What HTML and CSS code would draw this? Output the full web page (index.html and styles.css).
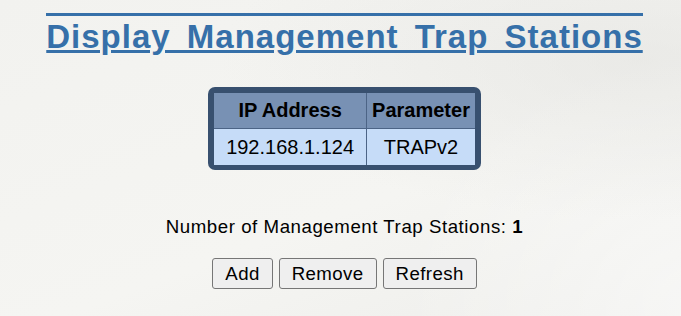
FILE: index.html
```html
<!DOCTYPE html>
<html lang="en">
<head>
  <meta charset="UTF-8">
  <title>Display Management Trap Stations</title>
  <link rel="stylesheet" href="styles.css">
</head>
<body>
  <div id="page">
    <h1 class="page-title">Display Management Trap Stations</h1>

    <!-- Trap station list -->
    <div class="trap-box">
      <table class="trap-table">
        <tr>
          <th class="col-ip">IP Address</th>
          <th class="col-param">Parameter</th>
        </tr>
        <tr>
          <td>192.168.1.124</td>
          <td>TRAPv2</td>
        </tr>
      </table>
    </div>

    <p class="station-count">Number of Management Trap Stations: <b>1</b></p>

    <form class="actions" action="">
      <button type="button">Add</button>
      <button type="button">Remove</button>
      <button type="button">Refresh</button>
    </form>
  </div>
</body>
</html>
```

FILE: styles.css
```css
/* Trap station page */
html, body {
  height: 100%;
}

body {
  margin: 0;
  padding: 0 0 0 8px;
  font-family: Arial, "Liberation Sans", sans-serif;
  color: #000;
  background-color: #f4f4f1;
  background-image:
    radial-gradient(ellipse 420px 160px at 640px 60px, rgba(225, 225, 222, 0.55), rgba(225, 225, 222, 0)),
    radial-gradient(ellipse 300px 260px at 700px 300px, rgba(255, 255, 255, 0.5), rgba(255, 255, 255, 0)),
    linear-gradient(160deg, #f2f2ef 0%, #f5f5f2 60%, #eeeeeb 100%);
  overflow: hidden;
}

#page {
  display: flex;
  flex-direction: column;
  align-items: center;
}

.page-title {
  margin: 13px 0 0;
  border-top: 3px solid #3670a9;
  color: #3670a9;
  font-size: 33px;
  line-height: 41px;
  font-weight: bold;
  letter-spacing: 1px;
  word-spacing: 6px;
  text-decoration: underline;
}

.trap-box {
  margin-top: 30px;
  padding: 6px 6px 5px;
  background-color: #38506f;
  border-radius: 7px;
}

.trap-table {
  border-collapse: collapse;
  font-size: 20px;
}

.trap-table th,
.trap-table td {
  border: 1px solid #4c6486;
  text-align: center;
  padding: 0 5px;
}

.trap-table tr:first-child th {
  border-top: none;
}

.trap-table tr:last-child td {
  border-bottom: none;
}

.trap-table th:first-child,
.trap-table td:first-child {
  border-left: none;
}

.trap-table th:last-child,
.trap-table td:last-child {
  border-right: none;
}

.trap-table th {
  height: 35px;
  background-color: #7891b4;
}

.trap-table td {
  height: 36px;
  background-color: #c6dcf8;
}

.col-ip {
  width: 142px;
}

.station-count {
  margin: 46px 0 0;
  font-size: 18.67px;
  line-height: 22px;
  letter-spacing: 0.55px;
}

.actions {
  display: flex;
  gap: 6px;
  margin-top: 20px;
}

.actions button {
  height: 31px;
  padding: 0 12px;
  font-family: Arial, "Liberation Sans", sans-serif;
  font-size: 18.67px;
  letter-spacing: 0.4px;
  color: #000;
  background-color: #efefef;
  border: 1px solid #767676;
  border-radius: 3px;
}
```
